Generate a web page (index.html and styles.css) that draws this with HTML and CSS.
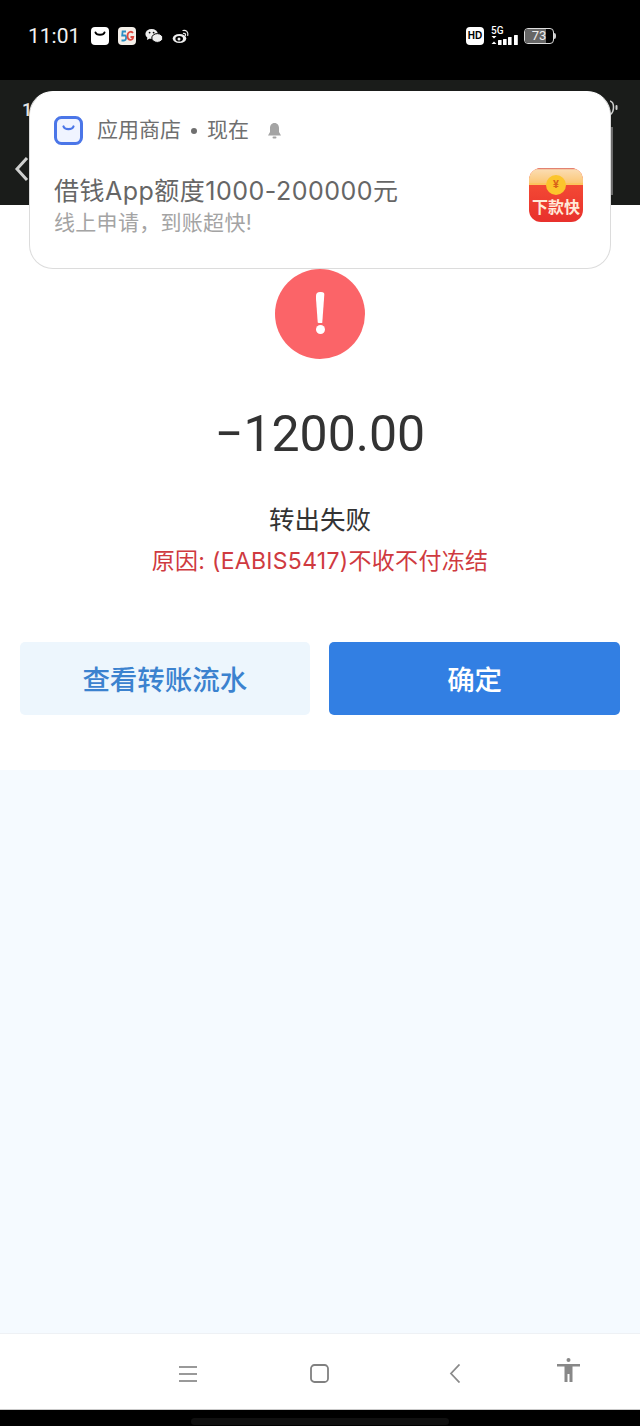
FILE: index.html
```html
<!DOCTYPE html>
<html lang="zh-CN">
<head>
<meta charset="utf-8">
<title>转出失败</title>
<link rel="stylesheet" href="styles.css">
</head>
<body>
<div class="phone">
  <header class="status">
    <span class="time">11:01</span>
    <div class="status-icons">
      <svg class="ic" width="18" height="18" viewBox="0 0 18 18"><rect x="0" y="0" width="18" height="18" rx="4" fill="#fff"/><path d="M4.5 5.5c1 3 8 3 9 0" fill="none" stroke="#000" stroke-width="2" stroke-linecap="round"/></svg>
      <svg class="ic" width="18" height="18" viewBox="0 0 18 18"><rect width="18" height="18" rx="4" fill="#f4efe9"/><path d="M8 4.5H4.6L4.2 8.5H7C8.6 8.5 8.6 13.5 6 13.5H3.5" fill="none" stroke="#2b8fc4" stroke-width="1.8"/><path d="M15 6C13.5 3.8 9.5 4.6 9.5 9C9.5 13.6 14.5 14.4 15.2 10H12.5" fill="none" stroke="#df4a40" stroke-width="1.8"/></svg>
      <svg class="ic" width="18" height="16" viewBox="0 0 18 16"><ellipse cx="6.6" cy="6" rx="6.2" ry="5" fill="#eee"/><path d="M2.5 9l-.6 3 3-1.600z" fill="#eee"/><ellipse cx="12.300" cy="10" rx="5.500" ry="4.400" fill="#eee" stroke="#000" stroke-width="1"/><circle cx="4.600" cy="4.600" r=".9" fill="#000"/><circle cx="8.600" cy="4.600" r=".9" fill="#000"/></svg>
      <svg class="ic" width="18" height="16" viewBox="0 0 18 16"><ellipse cx="7.500" cy="10.500" rx="6.800" ry="4.600" fill="#eee"/><ellipse cx="7.200" cy="10.800" rx="3.800" ry="2.800" fill="#000"/><circle cx="7" cy="11" r="1.500" fill="#eee"/><path d="M11 2.500c3-.8 5.500 1.500 4.800 5M11.500 5.300c1.500-.3 2.300.8 2 2" fill="none" stroke="#eee" stroke-width="1.200" stroke-linecap="round"/></svg>
    </div>
    <div class="status-right">
      <span class="hd">HD</span>
      <div class="signal">
        <span class="sig-label">5G</span>
        <svg width="28" height="10" viewBox="0 0 28 10" class="bars"><path d="M.5 1L3 3.500 5.500 1zM.5 9L3 6.500 5.500 9z" fill="#fff"/><rect x="7" y="5" width="3.600" height="5" rx=".5" fill="#fff"/><rect x="12" y="4" width="3.600" height="6" rx=".5" fill="#fff"/><rect x="17" y="2" width="3.600" height="8" rx=".5" fill="#fff"/><rect x="23" y="0" width="3.800" height="10" rx=".5" fill="#fff"/></svg>
      </div>
      <div class="battery"><span class="bat-fill"></span><span class="bat-num">73</span></div>
      <span class="bat-cap"></span>
    </div>
  </header>

  <div class="app-bar">
    <span class="bar-time">1</span>
    <svg class="bar-back" width="16" height="26" viewBox="0 0 16 26"><path d="M13 2L3 13l10 11" fill="none" stroke="#cfd0cf" stroke-width="3"/></svg>
    <svg class="bar-corner" width="8" height="16" viewBox="0 0 8 16"><path d="M0 1c3 1 3.500 3 3.500 6S3 13 0 15" fill="none" stroke="#cfd0cf" stroke-width="1.500"/><rect x="5.500" y="5" width="2" height="5" rx="1" fill="#cfd0cf"/></svg>
    <span class="bar-edge"></span>
  </div>

  <main class="result">
    <div class="alert-icon"><span class="alert-bar"></span><span class="alert-dot"></span></div>
    <div class="amount">−1200.00</div>
    <div class="state">转出失败</div>
    <div class="reason">原因: (EABIS5417)不收不付冻结</div>
    <div class="actions">
      <button class="btn btn-light">查看转账流水</button>
      <button class="btn btn-primary">确定</button>
    </div>
  </main>

  <div class="filler"></div>

  <nav class="nav">
    <svg class="nav-menu" width="18" height="16" viewBox="0 0 18 16"><path d="M0 1h18M0 8h18M0 15h18" stroke="#999" stroke-width="1.800"/></svg>
    <svg class="nav-home" width="19" height="19" viewBox="0 0 19 19"><rect x="1" y="1" width="17" height="17" rx="3.500" fill="none" stroke="#808080" stroke-width="1.800"/></svg>
    <svg class="nav-back" width="12" height="19" viewBox="0 0 12 19"><path d="M10.500 .5L2 9.500l8.500 9" fill="none" stroke="#8a8a8a" stroke-width="1.800"/></svg>
    <svg class="nav-person" width="23" height="24" viewBox="0 0 23 24"><circle cx="11.500" cy="2" r="2" fill="#888"/><path d="M0 6h23v2.500h-7.500V24h-3v-8h-2v8h-3V8.500H0z" fill="#888"/></svg>
  </nav>
  <div class="gesture"><span class="gesture-bar"></span></div>

  <aside class="notice">
    <div class="notice-head">
      <svg width="29" height="29" viewBox="0 0 29 29"><rect x="1.500" y="1.500" width="26" height="26" rx="6" fill="#f0f4ff" stroke="#4b76e8" stroke-width="3"/><path d="M9.500 10.500c1.200 3.500 8.800 3.500 10 0" fill="none" stroke="#4b76e8" stroke-width="2.200" stroke-linecap="round"/></svg>
      <span class="notice-app">应用商店</span>
      <span class="notice-dot"></span>
      <span class="notice-app">现在</span>
      <svg class="notice-bell" width="15" height="16" viewBox="0 0 15 16"><path d="M7.500 0C4.500 0 3 2.500 3 5v4L1 12.500h13L12 9V5c0-2.500-1.500-5-4.500-5z" fill="#a4a4a4"/><rect x="5.500" y="13.500" width="4" height="2" rx="1" fill="#a4a4a4"/></svg>
    </div>
    <div class="notice-body">
      <div class="notice-text">
        <div class="notice-title">借钱App额度1000-200000元</div>
        <div class="notice-sub">线上申请，到账超快!</div>
      </div>
      <div class="ad">
        <span class="ad-flap"></span>
        <span class="ad-coin">¥</span>
        <span class="ad-label">下款快</span>
      </div>
    </div>
  </aside>
</div>
</body>
</html>
```
FILE: styles.css
```css
* { box-sizing: border-box; }
html, body { margin: 0; padding: 0; }
body { font-family: Roboto, "Noto Sans CJK SC", sans-serif; background: #000; }
.phone { position: relative; width: 640px; height: 1426px; display: flex; flex-direction: column; overflow: hidden; }

.status { height: 80px; flex: none; background: #000; color: #fff; display: flex; align-items: flex-start; padding: 25px 0 0 28px; }
.time { font-size: 21px; line-height: 22px; color: #f2f2f2; width: 63px; }
.status-icons { display: flex; align-items: center; gap: 9px; height: 22px; }
.ic { display: block; flex: none; }
.status-right { margin-left: 276px; display: flex; align-items: center; height: 22px; }
.hd { width: 18px; height: 18px; border-radius: 4px; background: #fff; color: #000; font: 700 10px/18px "Liberation Sans", sans-serif; text-align: center; }
.signal { margin-left: 7px; width: 28px; height: 18px; display: flex; flex-direction: column; justify-content: flex-start; }
.sig-label { font: 500 10px/8px Roboto, sans-serif; color: #fff; }
.bars { display: block; }
.battery { position: relative; width: 30px; height: 16px; margin-left: 5px; border: 1.500px solid #ddd; border-radius: 4px; overflow: hidden; }
.bat-fill { display: block; width: 76%; height: 100%; background: #666; }
.bat-num { position: absolute; inset: 0; text-align: center; font: 13px/13px Roboto, sans-serif; color: #eee; }
.bat-cap { width: 2px; height: 6px; background: #ccc; border-radius: 0 2px 2px 0; }

.app-bar { position: relative; height: 125px; flex: none; background: #1a1c1a; }
.bar-time { position: absolute; left: 22px; top: 20px; font-size: 18px; line-height: 20px; font-weight: 500; color: #e4e4e4; }
.bar-back { position: absolute; left: 14px; top: 76px; }
.bar-corner { position: absolute; left: 610px; top: 20px; }
.bar-edge { position: absolute; left: 611px; top: 47px; width: 2px; height: 68px; background: #6c6c6c; }

.result { height: 565px; flex: none; background: #fff; display: flex; flex-direction: column; align-items: center; padding-top: 64px; }
.alert-icon { width: 90px; height: 90px; border-radius: 50%; background: #fb6468; display: flex; flex-direction: column; align-items: center; padding-top: 23px; }
.alert-bar { width: 9px; height: 31px; background: #fff; border-radius: 4px 4px 3px 3px; clip-path: polygon(0 0, 100% 0, 75% 100%, 25% 100%); }
.alert-dot { width: 9px; height: 9px; border-radius: 50%; background: #fff; margin-top: 2px; }
.amount { margin-top: 47px; font-size: 50px; line-height: 56px; color: #333; height: 56px; }
.state { margin-top: 40px; font-size: 25.500px; line-height: 36px; color: #333; }
.reason { margin-top: 7px; font: 23px/32px Inter, "Noto Sans CJK SC", sans-serif; letter-spacing: .3px; color: #cf3a40; }
.actions { margin-top: 65px; width: 100%; padding: 0 20px 0 19.500px; display: flex; gap: 19px; }
.btn { flex: 1 1 0; height: 73px; border: 0; border-radius: 5px; font: 500 27.500px/73px "Noto Sans CJK SC", sans-serif; padding: 0; }
.btn-light { background: #edf6fd; color: #3b82cf; }
.btn-primary { background: #327fe3; color: #fff; }

.filler { height: 564px; flex: none; background: #f5faff; border-bottom: 1px solid #eef1f5; }

.nav { position: relative; height: 76px; flex: none; background: #fff; border-bottom: 1px solid #c9c9c9; }
.nav-menu { position: absolute; left: 179px; top: 32px; }
.nav-home { position: absolute; left: 310px; top: 30px; }
.nav-back { position: absolute; left: 449px; top: 30px; }
.nav-person { position: absolute; left: 557px; top: 24px; }

.gesture { flex: 1; background: #000; display: flex; justify-content: center; align-items: flex-end; padding-bottom: 1px; }
.gesture-bar { width: 258px; height: 7px; border-radius: 4px; background: #101010; }

.notice { position: absolute; left: 29px; top: 91px; width: 582px; height: 178px; background: #fff; border-radius: 24px; border: 1px solid #dcdcdc; border-top-color: #fff; padding: 24px 24px 0 24px; }
.notice-head { display: flex; align-items: center; height: 29px; }
.notice-app { font-size: 21px; line-height: 29px; color: #6f6f6f; }
.notice-head > svg:first-child { margin-right: 14px; }
.notice-dot { width: 6px; height: 6px; border-radius: 50%; background: #6f6f6f; margin: 0 10px; }
.notice-bell { margin-left: 18px; }
.notice-body { display: flex; justify-content: space-between; align-items: flex-start; margin-top: 23px; }
.notice-title { font: 25px/32px Inter, "Noto Sans CJK SC", sans-serif; letter-spacing: .5px; color: #666; margin-top: 7px; }
.notice-sub { font: 21px/30px Inter, "Noto Sans CJK SC", sans-serif; letter-spacing: .3px; color: #a4a4a4; margin-top: 1px; }
.ad { position: relative; width: 54px; height: 54px; margin-right: 3px; border-radius: 12px; overflow: hidden; background: linear-gradient(#f85438, #e8302c); flex: none; }
.ad-flap { position: absolute; left: 0; top: 0; width: 100%; height: 17px; background: linear-gradient(#d9605a 0, #fbdcb0 12%, #fbc777 100%); border-bottom: 2px solid #fcc55e; }
.ad-coin { position: absolute; left: 17px; top: 7px; width: 20px; height: 20px; border-radius: 50%; background: #fcc52c; color: #d8621a; font: 700 11px/20px Roboto, sans-serif; text-align: center; }
.ad-label { position: absolute; left: 0; right: 0; top: 28px; text-align: center; font: 700 16px/20px "Noto Sans CJK SC", sans-serif; color: #ffe9d8; white-space: nowrap; }
```
